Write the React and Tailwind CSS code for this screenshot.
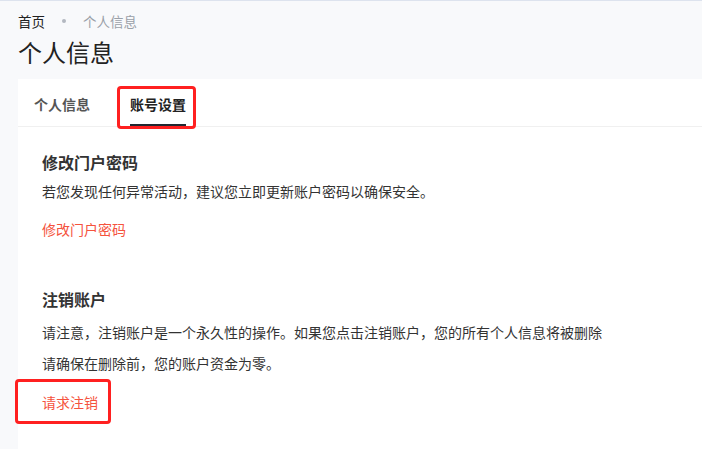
export default function App() {
  return (
    <div
      className="relative h-[449px] w-full overflow-hidden border-t border-[#dde3ee] bg-[#f8f9fb] text-[#333]"
      style={{ fontFamily: '"Noto Sans CJK SC", "Noto Sans", sans-serif' }}
    >
      <div className="pl-[18px] pt-[10px]">
        {/* breadcrumb */}
        <div className="flex h-[20px] items-center text-[13.5px] leading-[20px]">
          <span className="text-[#222]">首页</span>
          <span className="mx-[17px] h-[4px] w-[4px] rounded-full bg-[#b3b8c0]"></span>
          <span className="text-[#9aa0a8]">个人信息</span>
        </div>
        <h1 className="mt-[5px] text-[24px] leading-[32px] font-normal text-[#222]">个人信息</h1>
      </div>

      <div className="ml-[18px] mt-[11px] h-[370px] bg-white">
        {/* tabs */}
        <div className="flex h-[48px] border-b border-[#f0f0f0] pl-[16px] text-[14px] font-bold">
          <div className="flex items-center pt-[4px] text-[#555]">个人信息</div>
          <div className="relative ml-[40px] flex items-center pt-[4px] text-[#222]">
            账号设置
            <span className="absolute bottom-[-1px] left-0 h-[3px] w-full bg-[#222831]"></span>
          </div>
        </div>

        <div className="px-[24px]">
          <h2 className="mt-[23px] text-[16px] leading-[24px] font-bold text-[#333]">修改门户密码</h2>
          <p className="mt-[7px] text-[14px] leading-[20px] text-[#333]">
            若您发现任何异常活动，建议您立即更新账户密码以确保安全。
          </p>
          <a className="mt-[18px] block text-[14px] leading-[20px] text-[#f5533d]">修改门户密码</a>

          <h2 className="mt-[48px] text-[16px] leading-[24px] font-bold text-[#333]">注销账户</h2>
          <p className="mt-[11px] text-[14px] leading-[20px] text-[#333]">
            请注意，注销账户是一个永久性的操作。如果您点击注销账户，您的所有个人信息将被删除
          </p>
          <p className="mt-[11px] text-[14px] leading-[20px] text-[#333]">
            请确保在删除前，您的账户资金为零。
          </p>
          <a className="mt-[19px] block text-[14px] leading-[20px] text-[#f5533d]">请求注销</a>
        </div>
      </div>

      {/* annotation boxes */}
      <div className="absolute left-[117px] top-[85px] h-[43px] w-[79px] rounded-[4px] border-[3px] border-[#ff2020]"></div>
      <div className="absolute left-[15px] top-[378px] h-[45px] w-[96px] rounded-[4px] border-[3px] border-[#ff2020]"></div>
    </div>
  );
}
